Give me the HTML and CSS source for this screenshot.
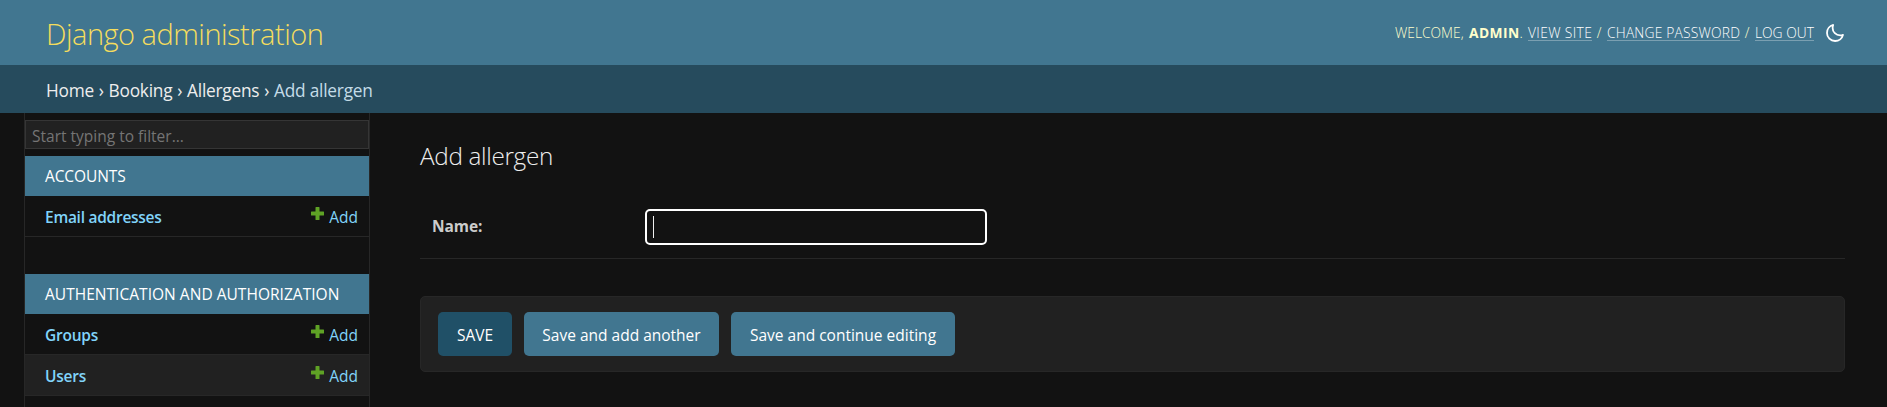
FILE: index.html
```
<!DOCTYPE html>
<html lang="en">
<head>
<meta charset="utf-8">
<title>Add allergen | Django administration</title>
<link rel="stylesheet" href="styles.css">
</head>
<body>
<header class="header">
  <div class="site-name">Django administration</div>
  <div class="user-tools">
    <span class="welcome">WELCOME,</span>
    <span class="user"><strong>ADMIN</strong>.</span>
    <a class="tool view-site">VIEW SITE</a>
    <span class="slash">/</span>
    <a class="tool change-password">CHANGE PASSWORD</a>
    <span class="slash">/</span>
    <a class="tool log-out">LOG OUT</a>
    <svg class="theme-icon" viewBox="0 0 512 512" width="20" height="20"><path d="M195 125c0-26.3 5.3-51.3 14.9-74.1C118.7 73 51 155.1 51 253c0 114.8 93.2 208 208 208 97.9 0 180-67.7 202.1-158.9-22.8 9.6-47.9 14.9-74.1 14.9-106 0-192-86-192-192z" fill="none" stroke="currentColor" stroke-width="46" stroke-linejoin="round"/></svg>
  </div>
</header>
<nav class="breadcrumbs">
  <a>Home</a><span class="sep">›</span><a>Booking</a><span class="sep">›</span><a>Allergens</a><span class="sep">›</span><span class="current">Add allergen</span>
</nav>
<div class="main">
  <aside class="sidebar">
    <input class="filter" type="text" placeholder="Start typing to filter...">
    <section class="module">
      <h2 class="caption accounts">ACCOUNTS</h2>
      <div class="row"><a class="model email">Email addresses</a><a class="add"><svg class="plus" viewBox="0 0 13 13"><path d="M4.5 .5q0-.5.5-.5h3q.5 0 .5.5v4h4q.5 0 .5.5v3q0 .5-.5.5h-4v4q0 .5-.5.5h-3q-.5 0-.5-.5v-4h-4q-.5 0-.5-.5v-3q0-.5.5-.5h4z"/></svg>Add</a></div>
    </section>
    <section class="module">
      <h2 class="caption">AUTHENTICATION AND AUTHORIZATION</h2>
      <div class="row"><a class="model">Groups</a><a class="add"><svg class="plus" viewBox="0 0 13 13"><path d="M4.5 .5q0-.5.5-.5h3q.5 0 .5.5v4h4q.5 0 .5.5v3q0 .5-.5.5h-4v4q0 .5-.5.5h-3q-.5 0-.5-.5v-4h-4q-.5 0-.5-.5v-3q0-.5.5-.5h4z"/></svg>Add</a></div>
      <div class="row shaded"><a class="model">Users</a><a class="add"><svg class="plus" viewBox="0 0 13 13"><path d="M4.5 .5q0-.5.5-.5h3q.5 0 .5.5v4h4q.5 0 .5.5v3q0 .5-.5.5h-4v4q0 .5-.5.5h-3q-.5 0-.5-.5v-4h-4q-.5 0-.5-.5v-3q0-.5.5-.5h4z"/></svg>Add</a></div>
    </section>
  </aside>
  <main class="content">
    <h1 class="title">Add allergen</h1>
    <div class="form-row">
      <label class="label" for="name">Name:</label>
      <div class="field" id="name"><span class="caret"></span></div>
    </div>
    <div class="submit-row">
      <button class="button default">SAVE</button>
      <button class="button">Save and add another</button>
      <button class="button continue">Save and continue editing</button>
    </div>
  </main>
</div>
</body>
</html>
```
FILE: styles.css
```
* { box-sizing: border-box; }
body {
  margin: 0;
  height: 407px;
  overflow: hidden;
  display: flex;
  flex-direction: column;
  background: #121212;
  color: #eee;
  font: 15.5px/20px "Open Sans", "Noto Sans", sans-serif;
}
.header {
  flex: none;
  height: 65px;
  padding: 0 42px 0 46px;
  display: flex;
  align-items: center;
  justify-content: space-between;
  background: #417690;
  color: #ffc;
}
.site-name {
  padding-top: 3px;
  color: #f5dd5d;
  font-size: 29px;
  line-height: 40px;
  font-weight: 300;
  letter-spacing: -0.5px;
}
.user-tools {
  display: flex;
  align-items: center;
  font-size: 13.8px;
  line-height: 17px;
  font-weight: 300;
  white-space: nowrap;
}
.welcome { width: 74px; }
.user { width: 59px; }
.user strong { font-weight: 700; letter-spacing: 0.4px; }
.tool {
  height: 17px;
  border-bottom: 1px solid rgba(255, 255, 255, 0.3);
  color: #fff;
  line-height: 17px;
}
.view-site { width: 64px; letter-spacing: 0.38px; }
.change-password { width: 133px; letter-spacing: 0.2px; }
.log-out { width: 59px; }
.slash { width: 15px; padding-right: 1px; text-align: center; }
.theme-icon { margin: 0 0 0 11px; color: #fff; }
.breadcrumbs {
  flex: none;
  height: 48px;
  padding: 3px 46px 0;
  display: flex;
  align-items: center;
  background: #264b5d;
  font-size: 17.3px;
  letter-spacing: -0.23px;
}
.sep { width: 14.7px; text-align: center; }
.current { color: #c4dce8; }
.main { flex: 1; min-height: 0; display: flex; }
.sidebar {
  width: 346px;
  margin-left: 24px;
  padding-top: 7px;
  border: solid #272727;
  border-width: 0 1px;
  flex: none;
}
.filter {
  display: block;
  width: 100%;
  height: 29px;
  margin-bottom: 7px;
  padding: 3px 6px 0;
  border: 1px solid #353535;
  background: #212121;
  color: #eee;
  font: inherit;
}
.filter::placeholder { color: #757575; opacity: 1; }
.module + .module { margin-top: 37px; }
.caption {
  height: 40px;
  margin: 0;
  padding: 10px 20px;
  background: #417690;
  color: #fff;
  font-size: 15.5px;
  line-height: 20px;
  font-weight: 400;
  letter-spacing: 0.03px;
}
.accounts { letter-spacing: -0.1px; }
.row {
  height: 41px;
  padding: 2px 11px 0 20px;
  display: flex;
  align-items: center;
  justify-content: space-between;
  border-bottom: 1px solid #272727;
  color: #81d4fa;
}
.shaded { background: #212121; }
.model { font-weight: 600; letter-spacing: -0.25px; }
.email { letter-spacing: -0.27px; }
.add { display: flex; gap: 5px; }
.plus { width: 13px; height: 13px; fill: #5fa225; }
.content { flex: 1; padding: 28px 42px 0 50px; }
.title {
  height: 30px;
  margin: 0 0 31px;
  font-size: 24.3px;
  line-height: 30px;
  font-weight: 300;
  letter-spacing: -0.32px;
}
.form-row {
  height: 57px;
  padding: 7px 12px 0;
  display: flex;
  border-bottom: 1px solid #272727;
}
.label {
  width: 213px;
  padding-top: 7px;
  color: #ccc;
  font-weight: 700;
  letter-spacing: -0.1px;
}
.field {
  width: 342px;
  height: 36px;
  padding: 5px 6px;
  border: 2px solid #fff;
  border-radius: 5px;
}
.caret { display: block; width: 1px; height: 22px; background: #eee; }
.submit-row {
  height: 76px;
  margin-top: 37px;
  padding: 15px 17px;
  display: flex;
  gap: 12px;
  background: #212121;
  border: 1px solid #272727;
  border-radius: 5px;
}
.button {
  height: 44px;
  width: 195px;
  padding: 2px 0 0;
  border: 0;
  border-radius: 5px;
  background: #417690;
  color: #fff;
  font: inherit;
  white-space: nowrap;
}
.default { width: 74px; background: #205067; }
.continue { width: 224px; }
```
